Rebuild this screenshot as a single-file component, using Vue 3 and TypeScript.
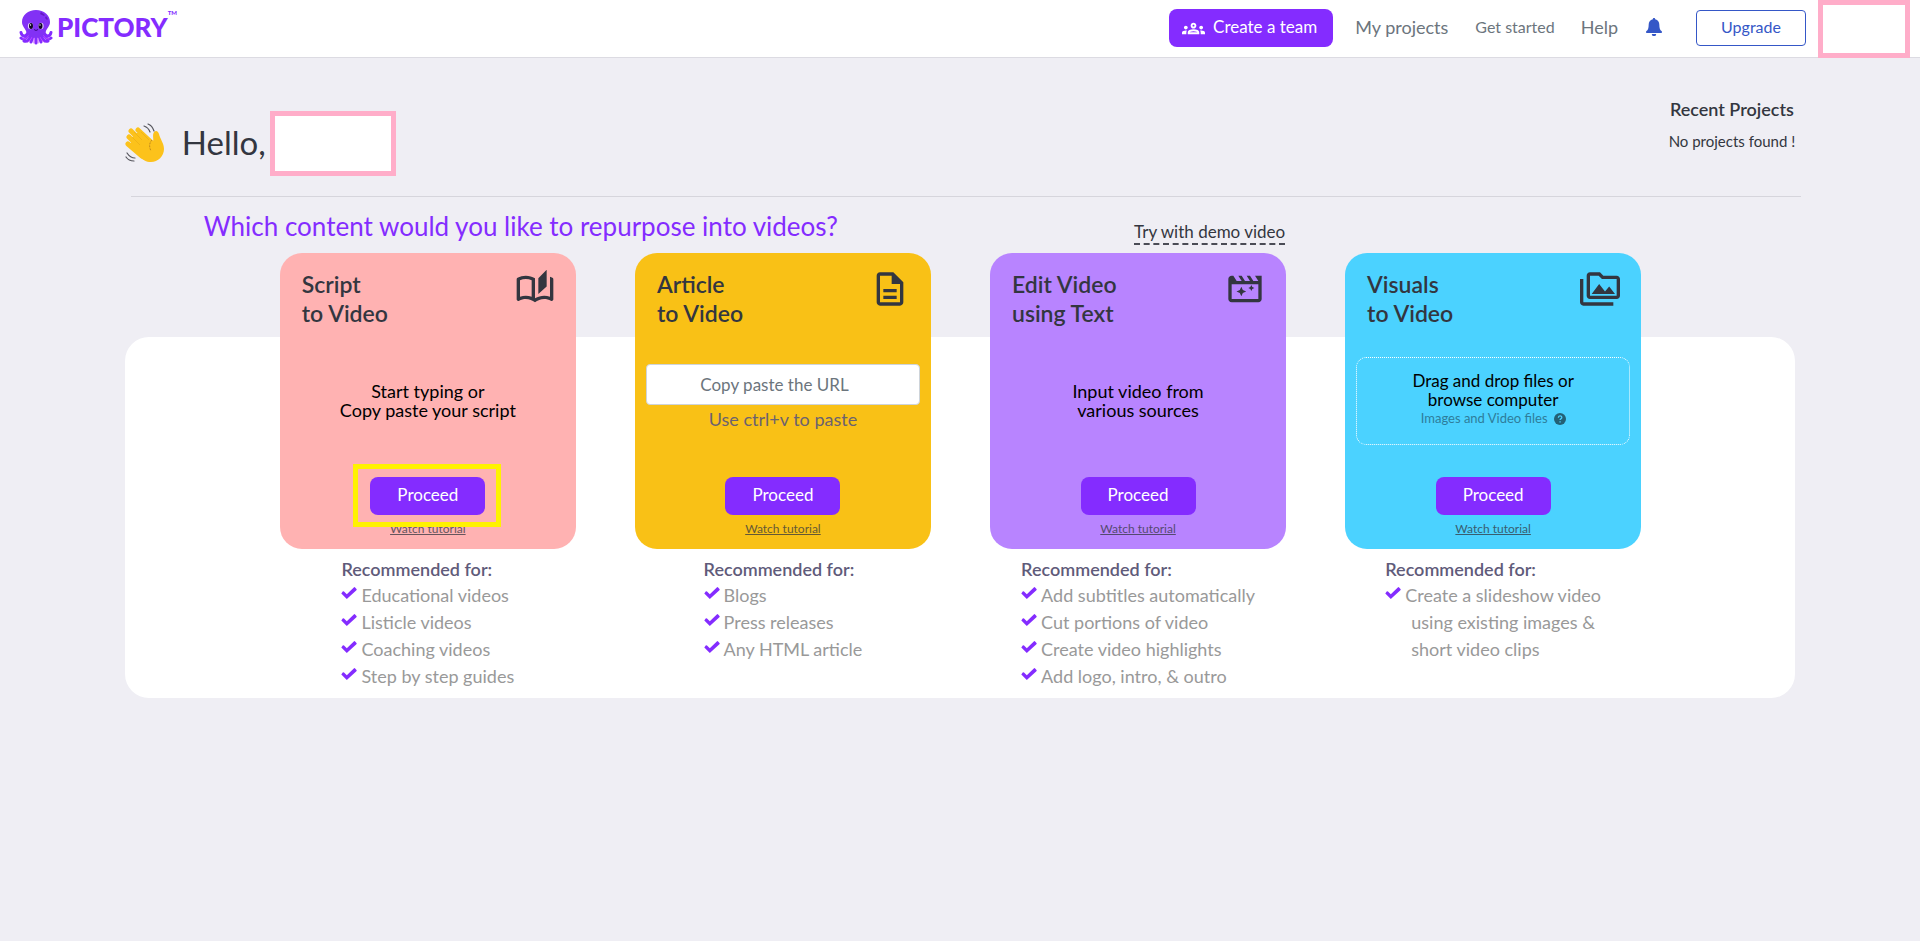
<script setup lang="ts">
interface Card {
  id: string
  title: string[]
  tone: string
  icon: string
  body: string[]
  uses: string[][]
}

const cards: Card[] = [
  {
    id: 'script',
    title: ['Script', 'to Video'],
    tone: 'pink',
    icon: 'M22.47 5.2c-.47-.24-.96-.44-1.47-.61v12.03c-1.14-.41-2.31-.62-3.5-.62-1.9 0-3.78.54-5.5 1.58V5.48C10.38 4.55 8.51 4 6.5 4c-1.79 0-3.48.44-4.97 1.2-.33.16-.53.51-.53.88v12.08c0 .58.47.99 1 .99.16 0 .32-.04.48-.12C3.69 18.4 5.05 18 6.5 18c2.07 0 3.98.82 5.5 2 1.52-1.18 3.43-2 5.5-2 1.45 0 2.81.4 4.02 1.04.16.08.32.12.48.12.52 0 1-.41 1-.99V6.08c0-.37-.2-.72-.53-.88zM10 16.62C8.86 16.21 7.69 16 6.5 16s-2.36.21-3.5.62V6.71C4.11 6.24 5.28 6 6.5 6s2.39.24 3.5.71v9.91zM19 .5l-5 5V15l5-4.5V.5z',
    body: ['Start typing or', 'Copy paste your script'],
    uses: [['Educational videos'], ['Listicle videos'], ['Coaching videos'], ['Step by step guides']],
  },
  {
    id: 'article',
    title: ['Article', 'to Video'],
    tone: 'yellow',
    icon: 'M8 16h8v2H8zm0-4h8v2H8zm6-10H6c-1.1 0-2 .9-2 2v16c0 1.1.89 2 1.99 2H18c1.1 0 2-.9 2-2V8l-6-6zm4 18H6V4h7v5h5v11z',
    body: [],
    uses: [['Blogs'], ['Press releases'], ['Any HTML article']],
  },
  {
    id: 'edit',
    title: ['Edit Video', 'using Text'],
    tone: 'violet',
    icon: 'M18 4l2 3.2h-3L15 4h-2l2 3.2h-3L10 4H8l2 3.2H7L5 4H4c-1.1 0-2 .9-2 2v12c0 1.1.9 2 2 2h16c1.1 0 2-.9 2-2V4h-4zm2 14H4V9.2h16V18zM9.8 10.6l.9 2 2 .9-2 .9-.9 2-.9-2-2-.9 2-.9zM15.8 9.6l.6 1.2 1.2.6-1.2.6-.6 1.2-.6-1.2-1.2-.6 1.2-.6z',
    body: ['Input video from', 'various sources'],
    uses: [['Add subtitles automatically'], ['Cut portions of video'], ['Create video highlights'], ['Add logo, intro, & outro']],
  },
  {
    id: 'visuals',
    title: ['Visuals', 'to Video'],
    tone: 'blue',
    icon: 'M2 6H0v5h.01L0 20c0 1.1.9 2 2 2h18v-2H2V6zm5 9h14l-3.5-4.5-2.5 3.01L11.5 9zM22 4h-8l-2-2H6c-1.1 0-1.99.9-1.99 2L4 16c0 1.1.9 2 2 2h16c1.1 0 2-.9 2-2V6c0-1.1-.9-2-2-2zm0 12H6V4h5.17l2 2H22v10z',
    body: [],
    uses: [['Create a slideshow video', 'using existing images &', 'short video clips']],
  },
]
</script>

<template>
  <header class="topbar">
    <a class="brand" href="#" aria-label="Pictory home">
      <svg class="octopus" viewBox="0 0 34 35" aria-hidden="true">
        <g fill="none" stroke="#842cff" stroke-width="3" stroke-linecap="round">
          <path d="M9 23C7 27 3 27 2 22.5" />
          <path d="M25 23c2 4 6 4 7-.5" />
          <path d="M10 24c-2 5-6 6-8 4" />
          <path d="M24 24c2 5 6 6 8 4" />
          <path d="M12 25c-1 5-4 7-7 6" />
          <path d="M22 25c1 5 4 7 7 6" />
          <path d="M14 26l-2 6" />
          <path d="M20 26l2 6" />
          <path d="M17 26v7" />
        </g>
        <g fill="none" stroke="#c04bff" stroke-width="1" stroke-linecap="round">
          <path d="M4 29c3 0 5-2 6-4M30 29c-3 0-5-2-6-4M9 32c2-1 3-3 4-5M25 32c-2-1-3-3-4-5M15 33v-5M19 33v-5" />
        </g>
        <path fill="#8231f5" d="M17 0c8 0 14 5 14 12 0 4-3 6-4 9-1 4-4 7-10 7S8 25 7 21c-1-3-4-5-4-9C3 5 9 0 17 0z" />
        <path fill="#6318c4" d="M22 2l4 3-1 1-4-2zM27 6l2 3-1 1-2-2z" />
        <ellipse cx="11.5" cy="16" rx="2.6" ry="3.2" fill="#e2d0ff" />
        <ellipse cx="22" cy="16" rx="2.6" ry="3.2" fill="#e2d0ff" />
        <ellipse cx="12" cy="16" rx="2" ry="2.9" fill="#110526" />
        <ellipse cx="21.5" cy="16" rx="2" ry="2.9" fill="#110526" />
        <circle cx="11.5" cy="15" r="0.7" fill="#fff" />
        <circle cx="21" cy="15" r="0.7" fill="#fff" />
        <path d="M15 19.5q2 2 4 0" fill="none" stroke="#3b0a85" stroke-width="1" />
      </svg>
      <span class="brand-name">PICTORY</span><span class="brand-tm">TM</span>
    </a>
    <nav class="nav">
      <button class="team" type="button">
        <svg viewBox="0 0 24 24" aria-hidden="true"><path fill="currentColor" d="M4 13c1.1 0 2-.9 2-2s-.9-2-2-2-2 .9-2 2 .9 2 2 2zm1.13 1.1c-.37-.06-.74-.1-1.13-.1-.99 0-1.93.21-2.78.58C.48 14.9 0 15.62 0 16.43V18h4.5v-1.61c0-.83.23-1.61.63-2.29zM20 13c1.1 0 2-.9 2-2s-.9-2-2-2-2 .9-2 2 .9 2 2 2zm4 3.43c0-.81-.48-1.53-1.22-1.85-.85-.37-1.79-.58-2.78-.58-.39 0-.76.04-1.13.1.4.68.63 1.46.63 2.29V18H24v-1.57zM16.24 13.65c-1.17-.52-2.61-.9-4.24-.9-1.63 0-3.07.39-4.24.9C6.68 14.13 6 15.21 6 16.39V18h12v-1.61c0-1.18-.68-2.26-1.76-2.74zM8.07 16c.09-.23.13-.39.91-.69.97-.38 1.99-.56 3.02-.56s2.05.18 3.02.56c.77.3.81.46.91.69H8.07zM12 8c.55 0 1 .45 1 1s-.45 1-1 1-1-.45-1-1 .45-1 1-1m0-2c-1.66 0-3 1.34-3 3s1.34 3 3 3 3-1.34 3-3-1.34-3-3-3z" /></svg>
        Create a team
      </button>
      <a class="nav-projects" href="#">My projects</a>
      <a class="nav-started" href="#">Get started</a>
      <a class="nav-help" href="#">Help</a>
      <button class="bell" type="button" aria-label="Notifications">
        <svg viewBox="0 0 16 18" aria-hidden="true"><path fill="currentColor" d="M8 0c.7 0 1.2.5 1.2 1.2C12 1.8 13.3 4 13.3 6.5c0 4 .9 5.5 2.2 6.5.9.8.5 2-.6 2H1.1C0 15-.4 13.8.5 13c1.3-1 2.2-2.5 2.2-6.5C2.7 4 4 1.8 6.8 1.2 6.8.5 7.3 0 8 0zM5.8 16h4.4A2.2 2.2 0 0 1 5.8 16z" /></svg>
      </button>
      <button class="upgrade" type="button">Upgrade</button>
      <div class="blank account"></div>
    </nav>
  </header>

  <main class="page">
    <section class="intro">
      <div class="greeting">
        <svg class="wave" viewBox="0 0 40 40" aria-hidden="true">
          <g fill="none" stroke="#fcc21b" stroke-width="5" stroke-linecap="round">
            <path d="M6 8l14 14M13 7l14 13M4 14l14 14M3 21l14 12" />
          </g>
          <path fill="#fcc21b" d="M8 13L15 8l13 11c1-3-1-7 1-10 2-2 4-1 5 2 1 5 5 9 5 15 0 7-6 13-13 13-5 0-8-2-12-6L5 24z" />
          <g stroke="#d99a12" stroke-width="0.7" fill="none"><path d="M9 9l8 8M7 14l8 8M16 9l8 8" opacity="0.5" /><path d="M27 17c-3 3-3 7-1 11" stroke="#a8731c" stroke-dasharray="2 1" /></g>
          <path d="M19 3c3 1 5 3 6 6M23 1c3 1 5 4 6 7M2 30c2 3 4 5 8 5M1 34c2 3 5 4 8 4" fill="none" stroke="#55555c" stroke-width="1.2" stroke-linecap="round" />
        </svg>
        <h1>Hello,</h1>
        <div class="blank name"></div>
      </div>
      <aside class="recent">
        <h2>Recent Projects</h2>
        <p>No projects found !</p>
      </aside>
    </section>

    <div class="ask">
      <h2>Which content would you like to repurpose into videos?</h2>
      <a href="#">Try with demo video</a>
    </div>

    <section class="panel">
      <div class="cards">
        <div v-for="card in cards" :key="card.id" class="column">
          <article class="card" :class="card.tone">
            <div class="card-head">
              <h3><span v-for="line in card.title" :key="line">{{ line }}</span></h3>
              <svg viewBox="0 0 24 24" aria-hidden="true"><path fill="currentColor" fill-rule="evenodd" :d="card.icon" /></svg>
            </div>

            <div v-if="card.id === 'article'" class="middle">
              <input type="text" placeholder="Copy paste the URL" aria-label="Article URL" />
              <p class="hint">Use ctrl+v to paste</p>
            </div>
            <div v-else-if="card.id === 'visuals'" class="middle">
              <div class="drop">
                <p>Drag and drop files or<br />browse computer</p>
                <p class="types">
                  Images and Video files
                  <svg viewBox="0 0 16 16" aria-hidden="true"><circle cx="8" cy="8" r="8" fill="currentColor" /><path d="M5.8 6.2c0-3 4.6-3 4.6-.3 0 1.7-2.3 1.7-2.3 3.4M8.1 11v1.7" fill="none" stroke="#4bd2ff" stroke-width="1.7" /></svg>
                </p>
              </div>
            </div>
            <div v-else class="middle">
              <p class="prompt"><span v-for="line in card.body" :key="line">{{ line }}</span></p>
            </div>

            <div class="actions" :class="{ marked: card.id === 'script' }">
              <button type="button">Proceed</button>
              <a href="#">Watch tutorial</a>
            </div>
          </article>

          <div class="uses">
            <h4>Recommended for:</h4>
            <ul>
              <li v-for="use in card.uses" :key="use[0]">
                <svg viewBox="0 0 16 12" aria-hidden="true"><path fill="#842cff" d="M.3 6.4L1.7 4.6Q2.3 4 3 4.6L5.8 7.2 12.8.4Q13.500-.2 14.1.5L15.5 2Q16 2.6 15.4 3.2L5.8 12z" /></svg>
                <span v-for="line in use" :key="line">{{ line }}</span>
              </li>
            </ul>
          </div>
        </div>
      </div>
    </section>
  </main>
</template>

<style>
body {
  background: #efeef4;
}
</style>

<style scoped>
* {
  box-sizing: border-box;
}
.topbar,
.page {
  font-family: Lato, 'Liberation Sans', sans-serif;
  color: #333640;
}
h1, h2, h3, h4, p, ul {
  margin: 0;
  padding: 0;
}
button {
  font-family: inherit;
  cursor: pointer;
}
.topbar {
  display: flex;
  justify-content: space-between;
  height: 58px;
  padding: 0 10px 0 19px;
  background: #fff;
  border-bottom: 1px solid #dcdbe2;
}
.brand {
  display: flex;
  align-items: flex-start;
  padding-top: 10px;
  color: #842cff;
  text-decoration: none;
}
.octopus {
  width: 34px;
  height: 35px;
}
.brand-name {
  margin: 1px 0 0 4px;
  font-size: 26px;
  line-height: 32px;
  font-weight: 900;
}
.brand-tm {
  font-size: 6px;
  line-height: 6px;
  font-weight: 900;
}
.nav {
  display: flex;
  align-items: center;
  padding-bottom: 1px;
}
.nav a {
  padding-bottom: 3px;
  color: #6c757d;
  font-size: 18px;
  line-height: 24px;
  text-decoration: none;
}
.team {
  display: flex;
  align-items: center;
  gap: 8px;
  height: 38px;
  padding: 0 16px 3px 13px;
  border: 0;
  border-radius: 8px;
  background: #842cff;
  color: #fff;
  font-size: 17px;
}
.team svg {
  width: 23px;
  height: 23px;
  margin-top: 3px;
}
.nav .nav-projects {
  margin-left: 22px;
}
.nav .nav-started {
  margin-left: 27px;
  font-size: 16px;
}
.nav .nav-help {
  margin-left: 26px;
}
.bell {
  display: flex;
  margin-left: 28px;
  padding: 0 0 2px;
  border: 0;
  background: none;
  color: #3557c7;
}
.bell svg {
  width: 16px;
  height: 18px;
}
.upgrade {
  width: 110px;
  height: 36px;
  margin-left: 34px;
  padding: 0 0 3px;
  border: 1px solid #3557c7;
  border-radius: 4px;
  background: #fff;
  color: #3557c7;
  font-size: 16px;
}
.blank {
  border: 5px solid #ffadc9;
  background: #fff;
}
.account {
  width: 92px;
  height: 58px;
  margin-left: 12px;
  align-self: flex-start;
}
.page {
  width: 87%;
  margin: 0 auto;
}
.intro {
  display: flex;
  justify-content: space-between;
  height: 139px;
  margin: 0 -6px 0 6px;
  border-bottom: 1px solid #d6d5dc;
}
.greeting {
  display: flex;
  align-items: center;
  height: 65px;
  margin: 53px 0 0 -6px;
}
.wave {
  width: 40px;
  height: 40px;
  margin-bottom: 2px;
}
h1 {
  margin: 0 4px 4px 17px;
  font-size: 33px;
  line-height: 40px;
  font-weight: 400;
}
.name {
  width: 126px;
  height: 65px;
}
.recent {
  padding: 37px 6px 0 0;
  text-align: center;
}
.recent h2 {
  font-size: 18px;
  line-height: 28px;
  font-weight: 600;
}
.recent p {
  margin-top: 6px;
  font-size: 15px;
  line-height: 24px;
}
.ask {
  display: flex;
  justify-content: space-between;
  height: 56px;
  padding: 9px 510px 0 79px;
}
.ask h2 {
  color: #842cff;
  font-size: 26px;
  line-height: 40px;
  font-weight: 400;
}
.ask a {
  align-self: flex-start;
  margin-top: 15px;
  border-bottom: 2px dashed #4a4c56;
  color: inherit;
  font-size: 17px;
  line-height: 22px;
  text-decoration: none;
}
.panel {
  display: flow-root;
  margin-top: 84px;
  padding: 0 154px 8px 155px;
  border-radius: 24px;
  background: #fff;
}
.cards {
  display: grid;
  grid-template-columns: repeat(4, 1fr);
  gap: 59px;
  margin-top: -84px;
}
.card {
  display: flex;
  flex-direction: column;
  height: 296px;
  padding: 16px 11px 10px;
  border-radius: 22px;
}
.pink { background: #ffb2b2; }
.yellow { background: #f9c116; }
.violet { background: #b884ff; }
.blue { background: #4bd2ff; }
.card-head {
  display: flex;
  justify-content: space-between;
  padding: 0 10px 0 11px;
}
.card-head svg {
  width: 40px;
  height: 40px;
}
.card-head h3 {
  padding-top: 1px;
  font-size: 23px;
  line-height: 29px;
  font-weight: 600;
}
h3 span,
.prompt span {
  display: block;
}
.middle {
  display: flex;
  flex: 1;
  flex-direction: column;
  padding-top: 29px;
  color: #000;
  text-align: center;
  font-size: 18px;
}
.middle input {
  width: 100%;
  height: 41px;
  margin-top: 7px;
  padding: 0 29px 0 12px;
  border: 1px solid #ced4da;
  border-radius: 4px;
  background: #fff;
  font-family: inherit;
  font-size: 17px;
  text-align: center;
}
.middle input::placeholder {
  color: #6c757d;
  opacity: 1;
}
.hint {
  margin-top: 3px;
  color: #6b6270;
  line-height: 22px;
}
.drop {
  height: 88px;
  padding-top: 13px;
  border: 1px dotted #fff;
  border-radius: 10px;
  font-size: 17px;
  line-height: 19px;
}
.types {
  display: flex;
  align-items: center;
  justify-content: center;
  gap: 6px;
  color: #2e7d9b;
  font-size: 13px;
}
.types svg {
  width: 12px;
  height: 12px;
  color: #236075;
}
.prompt {
  padding-top: 25px;
  line-height: 19px;
}
.actions {
  position: relative;
  display: flex;
  flex-direction: column;
  align-items: center;
  gap: 4px;
}
.actions button {
  width: 115px;
  height: 38px;
  padding: 0 0 3px;
  border: 0;
  border-radius: 8px;
  background: #842cff;
  color: #fff;
  font-size: 17px;
}
.actions a {
  color: #333640;
  font-size: 12px;
  line-height: 20px;
  opacity: 0.75;
}
.marked::after {
  content: '';
  position: absolute;
  top: -13px;
  left: 50%;
  box-sizing: border-box;
  width: 148px;
  height: 63px;
  margin-left: -75px;
  border: 5px solid #fff200;
  pointer-events: none;
}
.uses {
  width: fit-content;
  margin: 7px auto 0;
  font-size: 18px;
}
.uses h4 {
  color: #5f5b7a;
  font-size: 18px;
  line-height: 26px;
  font-weight: 600;
}
.uses ul {
  list-style: none;
  color: #999;
}
.uses li {
  display: grid;
  grid-template-columns: 16px auto;
  column-gap: 4px;
  line-height: 27px;
}
.uses li svg {
  width: 16px;
  height: 12px;
  margin-top: 5px;
}
.uses li span {
  grid-column: 2;
  white-space: nowrap;
}
.uses li span + span {
  padding-left: 6px;
}
</style>
